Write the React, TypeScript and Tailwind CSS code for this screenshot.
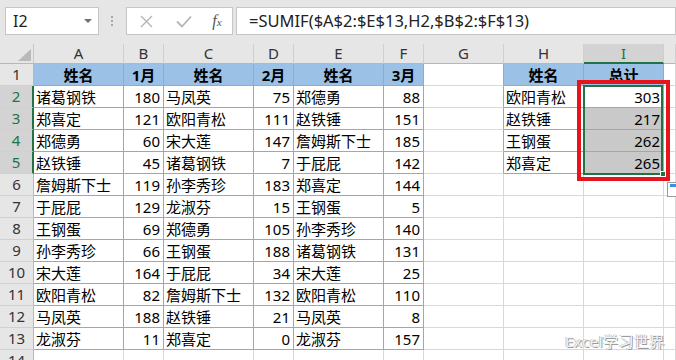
import React from "react";

type V = string | number | null;

const rows: V[][] = [
  ["姓名", "1月", "姓名", "2月", "姓名", "3月", null, "姓名", "总计"],
  ["诸葛钢铁", 180, "马凤英", 75, "郑德勇", 88, null, "欧阳青松", 303],
  ["郑喜定", 121, "欧阳青松", 111, "赵铁锤", 151, null, "赵铁锤", 217],
  ["郑德勇", 60, "宋大莲", 147, "詹姆斯下士", 185, null, "王钢蛋", 262],
  ["赵铁锤", 45, "诸葛钢铁", 7, "于屁屁", 142, null, "郑喜定", 265],
  ["詹姆斯下士", 119, "孙李秀珍", 183, "郑喜定", 144, null, null, null],
  ["于屁屁", 129, "龙淑芬", 15, "王钢蛋", 5, null, null, null],
  ["王钢蛋", 69, "郑德勇", 105, "孙李秀珍", 140, null, null, null],
  ["孙李秀珍", 66, "王钢蛋", 188, "诸葛钢铁", 131, null, null, null],
  ["宋大莲", 164, "于屁屁", 34, "宋大莲", 25, null, null, null],
  ["欧阳青松", 82, "詹姆斯下士", 132, "欧阳青松", 110, null, null, null],
  ["马凤英", 188, "赵铁锤", 21, "马凤英", 8, null, null, null],
  ["龙淑芬", 11, "郑喜定", 0, "龙淑芬", 157, null, null, null],
  [null, null, null, null, null, null, null, null, null],
];

const COLS = ["A", "B", "C", "D", "E", "F", "G", "H", "I", ""];

function inTable(r: number, c: number) {
  if (r >= 1 && r <= 13 && c >= 0 && c <= 5) return true;
  if (r >= 1 && r <= 5 && (c === 7 || c === 8)) return true;
  return false;
}

function Cell({ r, c }: { r: number; c: number }) {
  const v = c < 9 ? rows[r - 1][c] : null;
  const darkR = inTable(r, c) || inTable(r, c + 1);
  const darkB = inTable(r, c) || inTable(r + 1, c);
  const header = r === 1 && inTable(r, c);
  const selGrey = c === 8 && r >= 3 && r <= 5;
  const bg = header ? "bg-[#9bc2e6]" : selGrey ? "bg-[#c9c9c9]" : "bg-white";
  const br = darkR ? "border-r-[#a6a6a6]" : "border-r-[#d9d9d9]";
  const bb = darkB ? "border-b-[#a6a6a6]" : "border-b-[#d9d9d9]";
  const isNum = typeof v === "number";
  const align = header
    ? "justify-center font-bold"
    : isNum
    ? "justify-end pr-[3px]"
    : "justify-start pl-[2px]";
  return (
    <div
      className={`flex items-center overflow-hidden whitespace-nowrap border-r border-b pt-[1px] text-[15px] leading-none text-black ${bg} ${br} ${bb} ${align}`}
    >
      {v !== null ? String(v) : ""}
    </div>
  );
}

export default function App() {
  return (
    <div className="relative h-[360px] w-[676px] overflow-hidden bg-white font-['Noto_Sans','Noto_Sans_CJK_SC',sans-serif]">
      {/* formula bar */}
      <div className="flex h-[44px] items-start bg-[#e6e6e6] pt-[7px]">
        <div className="ml-[5px] flex h-[28px] w-[102px] items-center border border-[#c6c6c6] bg-white pl-[7px] text-[16px] text-[#222]">
          <span>I2</span>
          <div className="ml-auto mr-[6px] h-0 w-0 border-l-[4px] border-r-[4px] border-t-[4px] border-l-transparent border-r-transparent border-t-[#707070]" />
        </div>
        <div className="flex h-[28px] w-[30px] flex-col items-center justify-center gap-[2px]">
          <div className="h-[2px] w-[2px] bg-[#a8a8a8]" />
          <div className="h-[2px] w-[2px] bg-[#a8a8a8]" />
          <div className="h-[2px] w-[2px] bg-[#a8a8a8]" />
        </div>
        <div className="flex h-[28px] w-[110px] items-center border border-[#c6c6c6] bg-white pl-[1px]">
          <div className="flex w-[37px] justify-center">
            <svg width="13" height="13" viewBox="0 0 13 13">
              <path d="M1 1 L12 12 M12 1 L1 12" stroke="#b5b5b5" strokeWidth="1.4" fill="none" />
            </svg>
          </div>
          <div className="flex w-[37px] justify-center">
            <svg width="16" height="13" viewBox="0 0 16 13">
              <path d="M1 6.5 L6 11.5 L15 1.5" stroke="#b5b5b5" strokeWidth="1.8" fill="none" />
            </svg>
          </div>
          <div className="flex w-[30px] justify-center font-['Liberation_Serif',serif] italic text-[#555]">
            <span className="text-[16px] leading-none">f</span>
            <span className="mt-[4px] text-[11px] leading-none">x</span>
          </div>
        </div>
        <div className="ml-[3px] flex h-[28px] w-[440px] shrink-0 items-center border border-[#c6c6c6] bg-white pl-[12px] text-[16.5px] text-[#222]">
          =SUMIF($A$2:$E$13,H2,$B$2:$F$13)
        </div>
      </div>

      {/* sheet grid */}
      <div className="grid grid-cols-[34px_90px_40px_90px_40px_90px_40px_80px_80px_80px_12px] grid-rows-[20px_repeat(14,22px)]">
        {/* corner */}
        <div className="relative border-r border-b border-r-[#c8c8c8] border-b-[#b8b8b8] bg-[#e6e6e6]">
          <svg className="absolute right-[2px] bottom-[2px]" width="13" height="12" viewBox="0 0 13 12">
            <path d="M13 0 L13 12 L0 12 Z" fill="#b9b9b9" />
          </svg>
        </div>
        {COLS.map((l, i) => (
          <div
            key={l + i}
            className={`flex items-center justify-center border-r text-[15px] leading-none ${
              i === 8
                ? "border-b-2 border-b-[#217346] bg-[#d3d3d3] text-[#217346]"
                : "border-b border-b-[#b8b8b8] bg-[#e6e6e6] text-[#333]"
            } border-r-[#cfcfcf]`}
          >
            {l}
          </div>
        ))}
        {rows.map((_, ri) => {
          const r = ri + 1;
          const sel = r >= 2 && r <= 5;
          return (
            <React.Fragment key={r}>
              <div
                className={`flex items-center justify-center border-b border-b-[#d0d0d0] text-[15px] leading-none ${
                  sel
                    ? "border-r-2 border-r-[#217346] bg-[#d3d3d3] text-[#217346]"
                    : "border-r border-r-[#b8b8b8] bg-[#e6e6e6] text-[#333]"
                }`}
              >
                {r}
              </div>
              {COLS.map((_, c) => (
                <Cell key={c} r={r} c={c} />
              ))}
            </React.Fragment>
          );
        })}
      </div>

      {/* selection overlays */}
      <div className="pointer-events-none absolute left-[577px] top-[80px] h-[101px] w-[93px] border-[4px] border-[#e8141c]" />
      <div className="pointer-events-none absolute left-[583px] top-[85px] h-[90px] w-[80px] border-2 border-[#217346]" />
      <div className="pointer-events-none absolute left-[660px] top-[171px] h-[6px] w-[6px] border border-white bg-[#217346]" />

      {/* paste options icon */}
      <div className="pointer-events-none absolute left-[667px] top-[182px] h-[15px] w-[14px] border border-[#9a9a9a] bg-white">
        <div className="mx-[2px] mt-[1px] h-[3px] bg-[#3b8ee0]" />
      </div>

      {/* watermark */}
      <div className="pointer-events-none absolute left-[565px] top-[334px] text-[15px] leading-none tracking-[0.5px] text-[#f2f2f2] [text-shadow:1px_1px_0_#9c9c9c,-1px_0_0_#c4c4c4]">
        Excel学习世界
      </div>
    </div>
  );
}
